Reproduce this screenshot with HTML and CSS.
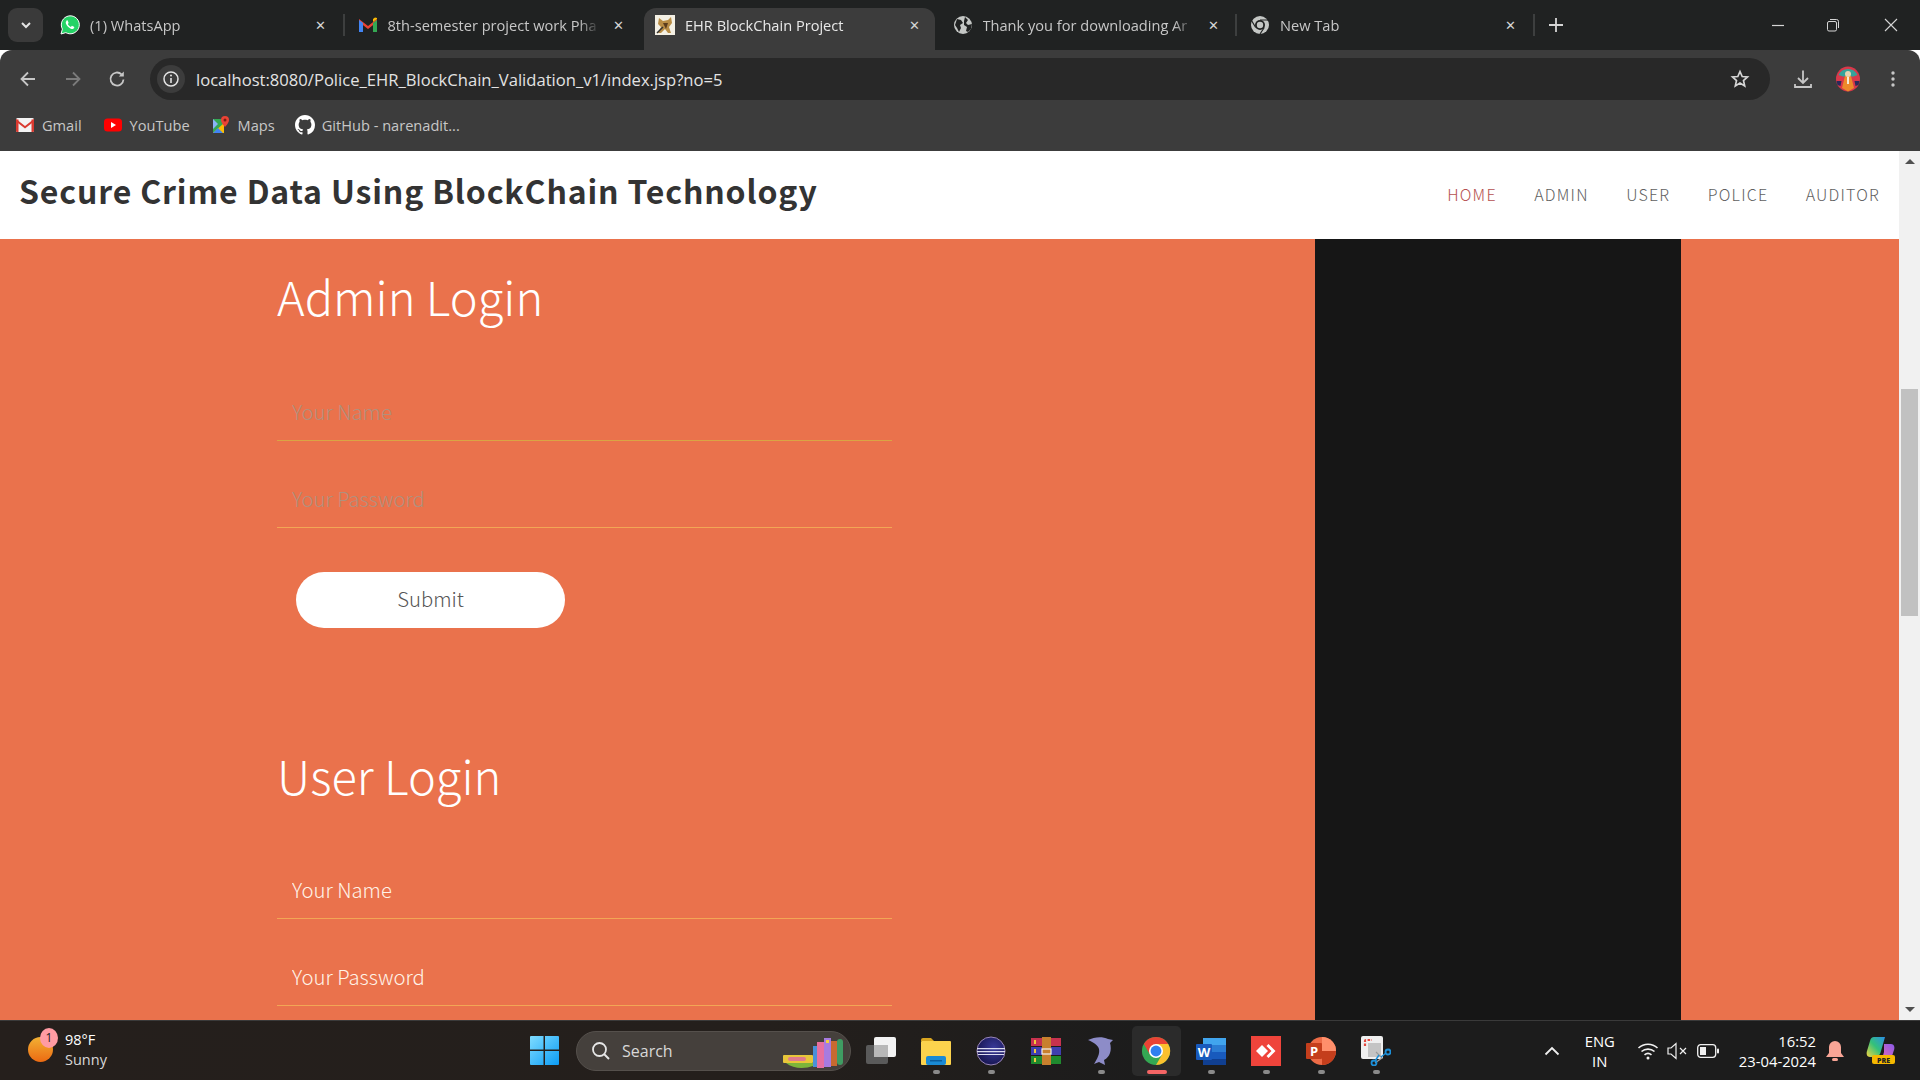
FILE: index.html
```html
<!DOCTYPE html>
<html lang="en">

<head>
    <meta charset="UTF-8">
    <meta name="viewport" content="width=device-width, initial-scale=1.0">
    <title>EHR BlockChain Project</title>
    <link rel="stylesheet" href="styles.css">
</head>

<body>
    <div class="screen">
        <!-- browser tabs -->
        <div class="tabstrip">
            <div class="tab-search">
                <svg width="14" height="14" viewBox="0 0 14 14"><path d="M3 5l4 4 4-4" fill="none" stroke="#e3e3e3" stroke-width="2"/></svg>
            </div>
            <div class="tab">
                <svg class="favicon" viewBox="0 0 20 20"><path d="M1 19l1.4-4.9A9 9 0 1 1 5.8 17.6z" fill="#25d366" stroke="#fff" stroke-width="1"/><path d="M7 5.5c-1.2.7-1.6 2-.9 3.6 1 2.2 2.6 3.7 4.7 4.6 1.5.6 2.8.2 3.4-1 .2-.4.1-.7-.2-.9l-1.7-.9c-.3-.1-.5 0-.7.2l-.6.8c-1.4-.5-2.6-1.7-3.2-3l.6-.7c.2-.2.2-.5.1-.7l-.8-1.8c-.2-.4-.5-.4-1.700-.2z" fill="#fff"/></svg>
                <span class="tab-title">(1) WhatsApp</span>
                <span class="tab-close">✕</span>
            </div>
            <div class="tab">
                <svg class="favicon" viewBox="0 0 20 20"><path d="M1 4l9 7 9-7v3l-9 7-9-7z" fill="#ea4335"/><path d="M1 5v12h4V8z" fill="#4285f4"/><path d="M19 5v12h-4V8z" fill="#34a853"/><path d="M15 7l4-3V3l-2-.5L15 4z" fill="#fbbc04"/></svg>
                <span class="tab-title">8th-semester project work Pha</span>
                <span class="tab-close">✕</span>
            </div>
            <div class="tab active">
                <svg class="favicon" viewBox="0 0 20 20"><rect width="20" height="20" fill="#f4f0e4"/><path d="M4 3l4 3 5-1 3-3 1 6-3 4 2 6h-3l-3-4-4 4H3l3-6-3-3z" fill="#b98d45"/><path d="M8 8h5l-2 6z" fill="#5b3d1e"/><path d="M2 18l6-6" stroke="#333" stroke-width="1.5"/></svg>
                <span class="tab-title">EHR BlockChain Project</span>
                <span class="tab-close">✕</span>
            </div>
            <div class="tab">
                <svg class="favicon" viewBox="0 0 20 20"><circle cx="10" cy="10" r="9" fill="#c4c7c5"/><path d="M4 4l4 1 2 3-3 2 1 3-2 4-2-4-2-3zM12 2l3 3-2 3 2 2 4-1-1 5-3 3-2-1 1-4-3-2V6z" fill="#202222"/></svg>
                <span class="tab-title">Thank you for downloading Ar</span>
                <span class="tab-close">✕</span>
            </div>
            <div class="tab">
                <svg class="favicon" viewBox="0 0 20 20"><circle cx="10" cy="10" r="9" fill="#c4c7c5"/><circle cx="10" cy="10" r="5" fill="#202222"/><circle cx="10" cy="10" r="3.2" fill="#c4c7c5"/><path d="M10 5h8.200M5.700 12.500L1.800 6M14.300 12.500L10 19" stroke="#202222" stroke-width="1.2"/></svg>
                <span class="tab-title">New Tab</span>
                <span class="tab-close">✕</span>
            </div>
            <svg class="tab-new" width="16" height="16" viewBox="0 0 16 16"><path d="M8 1v14M1 8h14" stroke="#d5d5d5" stroke-width="1.8"/></svg>
            <div class="win-controls">
                <svg width="14" height="14" viewBox="0 0 14 14"><path d="M1 7.5h12" stroke="#d5d5d5" stroke-width="1.2"/></svg>
                <svg width="14" height="14" viewBox="0 0 14 14"><rect x="1.5" y="3.5" width="9" height="9.5" rx="1.5" fill="none" stroke="#d5d5d5"/><path d="M4 1.500h6.500a2 2 0 0 1 2 2V10" fill="none" stroke="#d5d5d5"/></svg>
                <svg class="win-close" width="14" height="14" viewBox="0 0 14 14"><path d="M1 1l12 12M13 1L1 13" stroke="#d5d5d5" stroke-width="1.1"/></svg>
            </div>
        </div>

        <!-- address bar -->
        <div class="toolbar">
            <svg class="tool tool-back" viewBox="0 0 20 20"><path d="M17 10H4M10 3.500L3.500 10l6.500 6.500" fill="none" stroke="#c7c7c7" stroke-width="1.8"/></svg>
            <svg class="tool tool-next" viewBox="0 0 20 20"><path d="M3 10h13M10 3.500l6.500 6.500L10 16.500" fill="none" stroke="#7b7b7b" stroke-width="1.8"/></svg>
            <svg class="tool tool-reload" viewBox="0 0 20 20"><path d="M16.500 10.500a6.500 6.500 0 1 1-2-5.200" fill="none" stroke="#c7c7c7" stroke-width="1.8"/><path d="M16.800 2.500v5h-5z" fill="#c7c7c7"/></svg>
            <div class="omnibox">
                <span class="site-info">
                    <svg width="18" height="18" viewBox="0 0 18 18"><circle cx="9" cy="9" r="7" fill="none" stroke="#e3e3e3" stroke-width="1.5"/><path d="M9 8v5" stroke="#e3e3e3" stroke-width="1.6"/><circle cx="9" cy="5.6" r="1" fill="#e3e3e3"/></svg>
                </span>
                <span class="url">localhost:8080/Police_EHR_BlockChain_Validation_v1/index.jsp?no=5</span>
                <svg class="star" width="20" height="20" viewBox="0 0 20 20"><path d="M10 2.500l2.200 5 5.300.5-4 3.600 1.200 5.300L10 14.100l-4.700 2.800 1.200-5.300-4-3.600 5.300-.5z" fill="none" stroke="#d5d5d5" stroke-width="1.7"/></svg>
            </div>
            <svg class="tool tool-down" viewBox="0 0 20 20"><path d="M10 1.500v12M5 9l5 5 5-5M2 15v3h16v-3" fill="none" stroke="#c7c7c7" stroke-width="1.8"/></svg>
            <svg class="avatar" viewBox="0 0 26 26"><ellipse cx="13" cy="13" rx="12" ry="12.5" fill="#d9384a"/><path d="M3.500 9a10.500 10.500 0 0 1 19 0l-4 1.500H8z" fill="#35a39a"/><path d="M1.500 15h5l-1 5-3-1zM24.500 15h-5l1 5 3-1z" fill="#2b2a5a"/><path d="M10 10h6l3 12-6 3.500L7 22z" fill="#ed8a2a"/><circle cx="13" cy="8" r="3" fill="#e8d3b0"/><path d="M12 11h2v7h-2z" fill="#f4ead8"/></svg>
            <svg class="tool tool-menu" viewBox="0 0 20 20"><circle cx="10" cy="4" r="1.7" fill="#c7c7c7"/><circle cx="10" cy="10" r="1.7" fill="#c7c7c7"/><circle cx="10" cy="16" r="1.7" fill="#c7c7c7"/></svg>
        </div>

        <div class="bookmarks">
            <span class="bookmark">
                <svg class="mark-icon" viewBox="0 0 18 16"><rect y="1" width="18" height="14" rx="1.5" fill="#f3f3f3"/><path d="M0 2l9 7 9-7v2.500L9 11.500 0 4.500z" fill="#d93a30"/><path d="M0 2.500h2.500V15H1a1 1 0 0 1-1-1zM18 2.500h-2.500V15H17a1 1 0 0 0 1-1z" fill="#d93a30"/></svg>
                Gmail
            </span>
            <span class="bookmark">
                <svg class="mark-icon" viewBox="0 0 18 14"><rect width="18" height="13" y=".5" rx="3.5" fill="#f00"/><path d="M7 4l5 3-5 3z" fill="#fff"/></svg>
                YouTube
            </span>
            <span class="bookmark">
                <svg class="mark-icon" viewBox="0 0 18 18"><path d="M1 3h11v14H1z" fill="#34a853"/><path d="M1 17L12 7v10z" fill="#fbbc04"/><path d="M1 17l5-5 5 5z" fill="#4285f4"/><path d="M1 3l5 5-5 5z" fill="#8ab4f8"/><path d="M13 0a4 4 0 0 1 4 4c0 3-4 7-4 7s-4-4-4-7a4 4 0 0 1 4-4z" fill="#ea4335"/><circle cx="13" cy="4" r="1.5" fill="#7c1a12"/></svg>
                Maps
            </span>
            <span class="bookmark">
                <svg class="mark-icon gh" viewBox="0 0 16 16"><path fill="#fff" d="M8 0C3.580 0 0 3.580 0 8c0 3.540 2.290 6.530 5.470 7.590.4.070.55-.17.55-.38 0-.19-.01-.82-.01-1.490-2.010.37-2.530-.49-2.690-.94-.09-.23-.48-.94-.82-1.130-.28-.15-.68-.52-.01-.53.630-.01 1.080.58 1.230.82.720 1.210 1.870.87 2.330.66.070-.52.28-.87.510-1.070-1.780-.2-3.640-.89-3.640-3.950 0-.87.310-1.590.820-2.150-.08-.2-.36-1.020.08-2.120 0 0 .67-.21 2.200.82.640-.18 1.320-.27 2-.27s1.360.09 2 .27c1.530-1.040 2.200-.82 2.200-.82.440 1.100.160 1.920.080 2.120.510.560.820 1.270.820 2.150 0 3.070-1.870 3.750-3.650 3.950.290.250.540.730.540 1.480 0 1.070-.010 1.930-.010 2.200 0 .210.150.460.550.380A8.010 8.010 0 0 0 16 8c0-4.420-3.580-8-8-8z"/></svg>
                GitHub - narenadit...
            </span>
        </div>

        <!-- the page -->
        <div class="viewport">
            <div class="page">
                <header class="site-nav">
                    <h1 class="brand">Secure Crime Data Using BlockChain Technology</h1>
                    <nav class="menu">
                        <a class="current">HOME</a>
                        <a>ADMIN</a>
                        <a>USER</a>
                        <a>POLICE</a>
                        <a>AUDITOR</a>
                    </nav>
                </header>
                <main class="hero">
                    <section class="forms">
                        <form class="login">
                            <h2>Admin Login</h2>
                            <input class="field first" type="text" placeholder="Your Name">
                            <input class="field second" type="password" placeholder="Your Password">
                            <button class="submit" type="button">Submit</button>
                        </form>
                        <form class="login user">
                            <h2>User Login</h2>
                            <input class="field" type="text" placeholder="Your Name">
                            <input class="field" type="password" placeholder="Your Password">
                        </form>
                    </section>
                    <aside class="dark-col"></aside>
                    <div class="hero-end"></div>
                </main>
            </div>
            <div class="scrollbar">
                <span class="arrow up"></span>
                <span class="thumb"></span>
                <span class="arrow down"></span>
            </div>
        </div>

        <!-- windows taskbar -->
        <footer class="taskbar">
            <div class="weather">
                <span class="sun"></span>
                <span class="sun-badge">1</span>
                <div class="weather-text">
                    <span>98°F</span>
                    <span class="dim">Sunny</span>
                </div>
            </div>
            <div class="apps">
                <svg class="start" viewBox="0 0 29 29">
                    <defs><linearGradient id="winBlue" x1="0" y1="0" x2="1" y2="1"><stop offset="0" stop-color="#7fdcff"/><stop offset="1" stop-color="#0c9cf5"/></linearGradient></defs>
                    <path d="M0 1a1 1 0 0 1 1-1h12.500v13.500H0zM15 0h13a1 1 0 0 1 1 1v12.500H15zM0 15h13.500v14H1a1 1 0 0 1-1-1zM15 15h14v13a1 1 0 0 1-1 1H15z" fill="url(#winBlue)"/>
                </svg>
                <div class="searchbox">
                    <svg width="20" height="20" viewBox="0 0 20 20"><circle cx="8.5" cy="8.5" r="6.5" fill="none" stroke="#e6e6e6" stroke-width="1.8"/><path d="M13 13l5 5" stroke="#e6e6e6" stroke-width="2"/></svg>
                    <span>Search</span>
                    <svg class="books" width="64" height="32" viewBox="0 0 64 32">
                        <rect x="0" y="18" width="30" height="8" rx="1" fill="#e8c63a"/><rect x="5" y="20" width="18" height="4" rx="2" fill="#e07a8c"/><path d="M3 26h27v3c-8 3-20 3-27-3z" fill="#7cb53a"/>
                        <rect x="30" y="9" width="4" height="21" fill="#4a90d9"/><rect x="34" y="5" width="7" height="26" fill="#e76fa0"/><rect x="41" y="1" width="7" height="29" fill="#a77be0"/><rect x="43" y="3" width="3" height="3" fill="#f0d040"/><rect x="48" y="4" width="6" height="25" fill="#c86a30"/><rect x="54" y="2" width="6" height="26" rx="3" fill="#3f9c62"/>
                    </svg>
                </div>
                <svg class="taskview" viewBox="0 0 30 27"><rect x="0" y="8" width="22" height="19" rx="2" fill="#5a5a5a"/><rect x="8" y="0" width="22" height="20" rx="2" fill="#f3f3f3"/><rect x="8" y="8" width="14" height="12" fill="#b8b8b8"/></svg>

                <div class="app running">
                    <svg viewBox="0 0 30 28"><path d="M0 3a2 2 0 0 1 2-2h8l3 3H0z" fill="#d9a520"/><rect y="4" width="30" height="24" rx="1" fill="#fcd34d"/><rect x="5" y="19" width="20" height="9" rx="2" fill="#1a8ad4"/><rect x="9" y="23" width="12" height="1.5" fill="#0a5c9c"/></svg>
                </div>
                <div class="app running">
                    <svg viewBox="0 0 30 30">
                        <defs><radialGradient id="eclipseBall" cx=".6" cy=".4" r=".7"><stop offset="0" stop-color="#3a3a9a"/><stop offset="1" stop-color="#14124a"/></radialGradient></defs>
                        <circle cx="15" cy="15" r="14" fill="url(#eclipseBall)" stroke="#9a86b8" stroke-width="1"/>
                        <path d="M1 12h28v1.200H1zM1 15h28v1.200H1zM2 18h26v1H2z" fill="#dcdcf0"/>
                    </svg>
                </div>
                <div class="app">
                    <svg viewBox="0 0 30 28"><rect width="30" height="8" y="1" fill="#c8324e"/><rect width="30" height="8" y="10" fill="#3f3fb0"/><rect width="30" height="8" y="19" fill="#1f8a2e"/><rect x="11" y="0" width="9" height="28" fill="#c8802e"/><rect x="11" y="12" width="9" height="5" fill="none" stroke="#f0f0f0" stroke-width="1.2"/><rect x="3" y="3" width="2" height="4" fill="#f0c840"/><rect x="3" y="12" width="2" height="4" fill="#f0c840"/><rect x="3" y="21" width="2" height="4" fill="#f0c840"/></svg>
                </div>
                <div class="app running">
                    <svg viewBox="0 0 26 30"><path d="M0 4c6-3 14-4 20-1l5 1-3 3c2 7 0 14-6 17l1 5-6-3-5 2c3-5 6-10 5-15C10 9 5 6 0 4z" fill="#8d8cc8"/></svg>
                </div>
                <div class="app active">
                    <svg viewBox="0 0 32 32">
                        <circle cx="16" cy="16" r="15" fill="#34a853"/>
                        <path d="M3 8.500a15 15 0 0 1 26 0H16l-6.500 11.250z" fill="#ea4335"/>
                        <path d="M29 8.500A15 15 0 0 1 16 31l6.500-11.250L16 8.500z" fill="#fbc02d"/>
                        <circle cx="16" cy="16" r="7.5" fill="#fff"/>
                        <circle cx="16" cy="16" r="5.8" fill="#2f7ff0"/>
                    </svg>
                </div>
                <div class="app running">
                    <svg viewBox="0 0 30 28"><rect x="7" y="1" width="23" height="27" rx="1" fill="#2b7cd3"/><rect x="7" y="1" width="23" height="7" fill="#41a5ee"/><rect x="7" y="15" width="23" height="7" fill="#185abd"/><rect x="7" y="22" width="23" height="6" fill="#103f91"/><rect y="7" width="16" height="16" rx="1" fill="#185abd"/><text x="8" y="19.5" class="app-letter">W</text></svg>
                </div>
                <div class="app running">
                    <svg viewBox="0 0 30 30"><rect width="30" height="30" fill="#ef443b"/><path d="M11 9l6 6-6 6-6-6z" fill="#fff"/><path d="M17.500 8l7 7-7 7-2-2 5-5-5-5z" fill="#fff"/></svg>
                </div>
                <div class="app running">
                    <svg viewBox="0 0 30 30"><circle cx="16" cy="15" r="14" fill="#ed6c47"/><path d="M16 1a14 14 0 0 1 14 14H16z" fill="#ff8f6b"/><path d="M30 15a14 14 0 0 1-14 14V15z" fill="#c43e1c"/><rect y="7" width="16" height="16" rx="1" fill="#c43e1c"/><text x="8" y="19.5" class="app-letter">P</text></svg>
                </div>
                <div class="app running">
                    <svg viewBox="0 0 30 30"><rect width="22" height="23" rx="2" fill="#efefef"/><path d="M4 10V5a1 1 0 0 1 1-1h6" fill="none" stroke="#e3463c" stroke-width="2.2" stroke-dasharray="2.500 1.500"/><rect x="7" y="7" width="13" height="14" fill="#c4c4c4"/><path d="M21 22l-7 5M15 16l6 6" stroke="#9a9a9a" stroke-width="1.2"/><circle cx="27" cy="16" r="2.5" fill="none" stroke="#1c8fd8" stroke-width="1.8"/><circle cx="13" cy="27" r="2.5" fill="none" stroke="#1c8fd8" stroke-width="1.8"/><path d="M25 17l-5 4M14 25l4-6" stroke="#1c8fd8" stroke-width="1.5"/></svg>
                </div>
            </div>
            <div class="tray">
                <svg class="tray-up" width="16" height="10" viewBox="0 0 16 10"><path d="M1.500 8.500L8 2l6.500 6.500" fill="none" stroke="#f0f0f0" stroke-width="1.8"/></svg>
                <div class="lang"><span>ENG</span><span>IN</span></div>
                <svg class="tray-wifi" width="22" height="20" viewBox="0 0 22 20"><path d="M1.500 7a14 14 0 0 1 19 0M4.500 10.500a10 10 0 0 1 13 0M7.500 13.800a5.500 5.500 0 0 1 7 0" fill="none" stroke="#f0f0f0" stroke-width="1.6"/><circle cx="11" cy="17" r="1.5" fill="#f0f0f0"/></svg>
                <svg class="tray-vol" width="22" height="18" viewBox="0 0 22 18"><path d="M1 6h3l5-4.500v15L4 12H1z" fill="none" stroke="#f0f0f0" stroke-width="1.2"/><path d="M13 6l6 6M19 6l-6 6" stroke="#f0f0f0" stroke-width="1.2"/></svg>
                <svg class="tray-bat" width="22" height="14" viewBox="0 0 22 14"><rect x=".7" y=".7" width="18" height="12.6" rx="3" fill="none" stroke="#f0f0f0" stroke-width="1.3"/><rect x="3" y="3" width="6" height="8" fill="#f0f0f0"/><rect x="20" y="4.5" width="2" height="5" rx="1" fill="#f0f0f0"/></svg>
                <div class="clock"><span>16:52</span><span>23-04-2024</span></div>
                <svg class="tray-bell" width="18" height="22" viewBox="0 0 18 22"><path d="M9 1a6 6 0 0 1 6 6v6l3 4H0l3-4V7a6 6 0 0 1 6-6z" fill="#f9a596"/><rect x="6" y="18" width="6" height="3" rx="1.5" fill="#f9a596"/></svg>
                <svg class="copilot" width="30" height="30" viewBox="0 0 30 30">
                    <defs>
                        <linearGradient id="copA" x1="0" y1="1" x2="1" y2="0"><stop offset="0" stop-color="#f5d53f"/><stop offset=".5" stop-color="#34c17a"/><stop offset="1" stop-color="#2a8fe8"/></linearGradient>
                        <linearGradient id="copB" x1="0" y1="1" x2="1" y2="0"><stop offset="0" stop-color="#e86ab8"/><stop offset="1" stop-color="#8a5ae8"/></linearGradient>
                    </defs>
                    <path d="M8 1h11l-4 14c-1 4-3 6-7 6H4c-3 0-4-3-3-6l3-10c.6-2.500 2-4 4-4z" fill="url(#copA)"/>
                    <path d="M18 8h7c3 0 4 3 3 6l-2 6c-.6 2-2 3-4 3H13c3-1 4-3 5-7z" fill="url(#copB)"/>
                    <rect x="6" y="19" width="23" height="9" rx="2" fill="#f5b800"/>
                    <text x="17.5" y="26.5" class="pre">PRE</text>
                </svg>
            </div>
        </footer>
    </div>
</body>

</html>
```

FILE: styles.css
```css
* {
    box-sizing: border-box;
}

html,
body {
    margin: 0;
    height: 100%;
    overflow: hidden;
}

body {
    font-family: "Open Sans", "Noto Sans", sans-serif;
}

.screen {
    display: flex;
    flex-direction: column;
    width: 1920px;
    height: 1080px;
}

/* tabs */
.tabstrip {
    display: flex;
    align-items: flex-end;
    height: 50px;
    padding-left: 8px;
    background-color: #202222;
    flex-shrink: 0;
}

.tab-search {
    display: flex;
    align-items: center;
    justify-content: center;
    width: 35px;
    height: 34px;
    margin: 0 6px 8px 0;
    border-radius: 9px;
    background-color: #3a3a3a;
}

.tab {
    display: flex;
    align-items: center;
    width: 297.5px;
    height: 42px;
    padding: 0 14px 8px 11px;
    color: #c7c7c7;
    font-size: 14.6px;
    font-weight: 500;
    border-right: 2px solid transparent;
    position: relative;
}

.tab::after {
    content: "";
    position: absolute;
    right: 0;
    top: 6px;
    height: 22px;
    width: 2px;
    background-color: #3d3f3f;
}

.tab.active {
    width: 291px;
    margin-right: 6.5px;
    padding-right: 9px;
    background-color: #3c3c3c;
    color: #e8e8e8;
    border-radius: 12px 12px 0 0;
}

.tab.active::after,
.tab:nth-child(3)::after {
    display: none;
}

.favicon {
    width: 20px;
    height: 20px;
    flex-shrink: 0;
    margin-right: 10px;
}

.tab-title {
    flex: 1;
    overflow: hidden;
    white-space: nowrap;
    -webkit-mask-image: linear-gradient(to right, #000 90%, transparent 100%);
    mask-image: linear-gradient(to right, #000 90%, transparent 100%);
}

.tab-close {
    width: 20px;
    margin-left: 8px;
    text-align: center;
    font-size: 13px;
    color: #d5d5d5;
}

.tab-new {
    margin: 0 0 17px 11.5px;
}

.win-controls {
    display: flex;
    gap: 41px;
    margin: 0 0 18px auto;
    padding-right: 22px;
}

.win-close {
    margin-left: 3px;
}

/* address bar */
.toolbar {
    display: flex;
    align-items: center;
    height: 58px;
    padding: 8px 0 8px 18px;
    background-color: #3c3c3c;
    border-radius: 12px 12px 0 0;
    flex-shrink: 0;
}

.tool {
    width: 20px;
    height: 20px;
    flex-shrink: 0;
}

.tool-next {
    margin-left: 25px;
}

.tool-reload {
    margin-left: 24px;
}

.omnibox {
    display: flex;
    align-items: center;
    flex: 0 0 1620px;
    height: 42px;
    margin-left: 23px;
    padding: 0 20px 0 7px;
    background-color: #282828;
    border-radius: 21px;
}

.site-info {
    display: flex;
    align-items: center;
    justify-content: center;
    width: 28px;
    height: 28px;
    border-radius: 50%;
    background-color: #3c3c3c;
}

.url {
    margin-left: 11px;
    padding-top: 1px;
    color: #e3e3e3;
    font-size: 16.6px;
}

.star {
    margin-left: auto;
}

.tool-down {
    margin-left: 23px;
}

.avatar {
    width: 26px;
    height: 26px;
    margin-left: 22px;
}

.tool-menu {
    margin-left: 22px;
}

.bookmarks {
    display: flex;
    align-items: center;
    height: 43px;
    padding: 0 0 9px 16px;
    background-color: #3c3c3c;
    flex-shrink: 0;
}

.bookmark {
    display: flex;
    align-items: center;
    margin-right: 22px;
    color: #c7c7c7;
    font-size: 14.6px;
    font-weight: 500;
}

.mark-icon {
    width: 18px;
    height: 18px;
    margin-right: 8px;
}

.gh {
    width: 20px;
    height: 20px;
    margin-left: -2px;
    margin-right: 7px;
}

/* page */
.viewport {
    display: flex;
    flex: 1;
    min-height: 0;
}

.page {
    display: flex;
    flex-direction: column;
    flex: 1;
    min-width: 0;
    font-family: "Noto Sans CJK JP", "Lato", sans-serif;
}

.site-nav {
    display: flex;
    align-items: center;
    justify-content: space-between;
    height: 88px;
    padding: 0 19px;
    background-color: #ffffff;
    flex-shrink: 0;
}

.brand {
    margin: -10px 0 0;
    color: #333333;
    font-size: 32px;
    font-weight: 700;
    letter-spacing: 0.85px;
}

.menu {
    display: flex;
    gap: 37.5px;
    margin-top: -2px;
}

.menu a {
    color: #5f5f5f;
    font-size: 16px;
    font-weight: 300;
    letter-spacing: 1.2px;
}

.menu a.current {
    color: #b5504f;
}

.hero {
    display: flex;
    flex: 1;
    min-height: 0;
    overflow: hidden;
    background-color: #ea724c;
}

.forms {
    flex: 0 0 1315px;
    padding-left: 277px;
}

.login {
    display: flex;
    flex-direction: column;
    align-items: flex-start;
    width: 615px;
}

.login h2 {
    margin: 27px 0 0;
    height: 60px;
    color: #ffffff;
    font-size: 47px;
    font-weight: 300;
    line-height: 60px;
}

.field {
    width: 100%;
    height: 59px;
    margin-top: 28px;
    padding: 0 15px;
    border: 0;
    border-bottom: 1px solid #f2a655;
    background: transparent;
    color: #fff;
    font-family: inherit;
    font-size: 20.3px;
    font-weight: 300;
}

.login h2 + .field {
    margin-top: 56px;
}

.field::placeholder {
    color: #fff3e8;
    opacity: 1;
}

.first {
    border-bottom-color: #d9a544;
}

.first::placeholder,
.second::placeholder {
    color: #b0907e;
}

.submit {
    width: 269px;
    height: 56px;
    margin: 44px 0 0 19px;
    padding-bottom: 6px;
    border: 0;
    border-radius: 28px;
    background-color: #ffffff;
    color: #555555;
    font-family: inherit;
    font-size: 20.3px;
    font-weight: 300;
}

.login.user h2 {
    margin-top: 117px;
}

.login.user h2 + .field {
    margin-top: 55px;
}

.dark-col {
    flex: 0 0 366px;
    background-color: #161616;
}

.hero-end {
    flex: 1;
}

.scrollbar {
    display: flex;
    flex-direction: column;
    align-items: center;
    flex: 0 0 21px;
    padding: 8px 0;
    background-color: #f1f1f1;
}

.arrow {
    width: 0;
    height: 0;
    border-left: 5px solid transparent;
    border-right: 5px solid transparent;
}

.arrow.up {
    border-bottom: 5px solid #505050;
}

.arrow.down {
    margin-top: auto;
    border-top: 5px solid #505050;
}

.thumb {
    width: 17px;
    height: 227px;
    margin-top: 225px;
    background-color: #c1c1c1;
}

/* taskbar */
.taskbar {
    display: flex;
    align-items: center;
    height: 60px;
    background: linear-gradient(to right, #251f1c 0%, #241f1c 40%, #1c1c1c 60%, #1c1c1c 100%);
    border-top: 1px solid #3a3a3a;
    color: #ffffff;
    font-family: "Open Sans", "Noto Sans", sans-serif;
    flex-shrink: 0;
    position: relative;
}

.weather {
    display: flex;
    align-items: center;
    width: 530px;
    padding-left: 65px;
    position: relative;
    font-size: 14.5px;
}

.sun {
    position: absolute;
    left: 28px;
    top: 5px;
    width: 25px;
    height: 25px;
    border-radius: 50%;
    background: linear-gradient(#f2b134, #ec6a12);
}

.sun-badge {
    position: absolute;
    left: 40px;
    top: -4px;
    width: 18px;
    height: 20px;
    border-radius: 50%;
    background-color: #ff9ba3;
    color: #222;
    font-size: 12px;
    line-height: 20px;
    text-align: center;
}

.weather-text {
    display: flex;
    flex-direction: column;
    margin-top: -2px;
    line-height: 20px;
}

.dim {
    color: #d8d8d8;
}

.apps {
    display: flex;
    align-items: center;
}

.start {
    width: 29px;
    height: 29px;
}

.searchbox {
    display: flex;
    align-items: center;
    width: 275px;
    height: 40px;
    margin-left: 17px;
    padding-left: 14px;
    border: 1px solid #55504c;
    border-radius: 20px;
    background-color: #45403c;
    color: #d8d8d8;
    font-size: 16px;
    position: relative;
}

.searchbox span {
    margin-left: 11px;
}

.books {
    position: absolute;
    right: 3px;
    top: 5px;
}

.taskview {
    width: 30px;
    height: 27px;
    margin: 0 12.5px 0 15px;
}

.app {
    display: flex;
    align-items: center;
    justify-content: center;
    width: 55px;
    height: 50px;
    position: relative;
}

.app svg {
    width: 30px;
    height: 30px;
}

.app.running::after {
    content: "";
    position: absolute;
    left: 24px;
    bottom: 2px;
    width: 7px;
    height: 4px;
    border-radius: 2px;
    background-color: #8a8a8a;
}

.app.active {
    width: 49px;
    margin: 0 3px;
    border-radius: 5px;
    background-color: #2b2b2b;
}

.app.active::after {
    content: "";
    position: absolute;
    left: 15px;
    bottom: 2px;
    width: 20px;
    height: 4px;
    border-radius: 2px;
    background-color: #f56565;
}

.app-letter {
    fill: #ffffff;
    font-family: "Open Sans", sans-serif;
    font-size: 13px;
    font-weight: 700;
    text-anchor: middle;
}

.tray {
    display: flex;
    align-items: center;
    margin-left: auto;
    padding-right: 24px;
    font-size: 14.8px;
}

.lang,
.clock {
    display: flex;
    flex-direction: column;
    line-height: 20px;
}

.lang {
    align-items: center;
    margin-left: 25px;
}

.clock {
    align-items: flex-end;
    margin-left: 20px;
}

.tray-wifi {
    margin-left: 22px;
}

.tray-vol {
    margin-left: 8px;
}

.tray-bat {
    margin-left: 8px;
}

.tray-bell {
    margin-left: 10px;
}

.copilot {
    margin-left: 22px;
}

.pre {
    fill: #222222;
    font-family: "Open Sans", sans-serif;
    font-size: 7px;
    font-weight: 800;
    text-anchor: middle;
}
```
